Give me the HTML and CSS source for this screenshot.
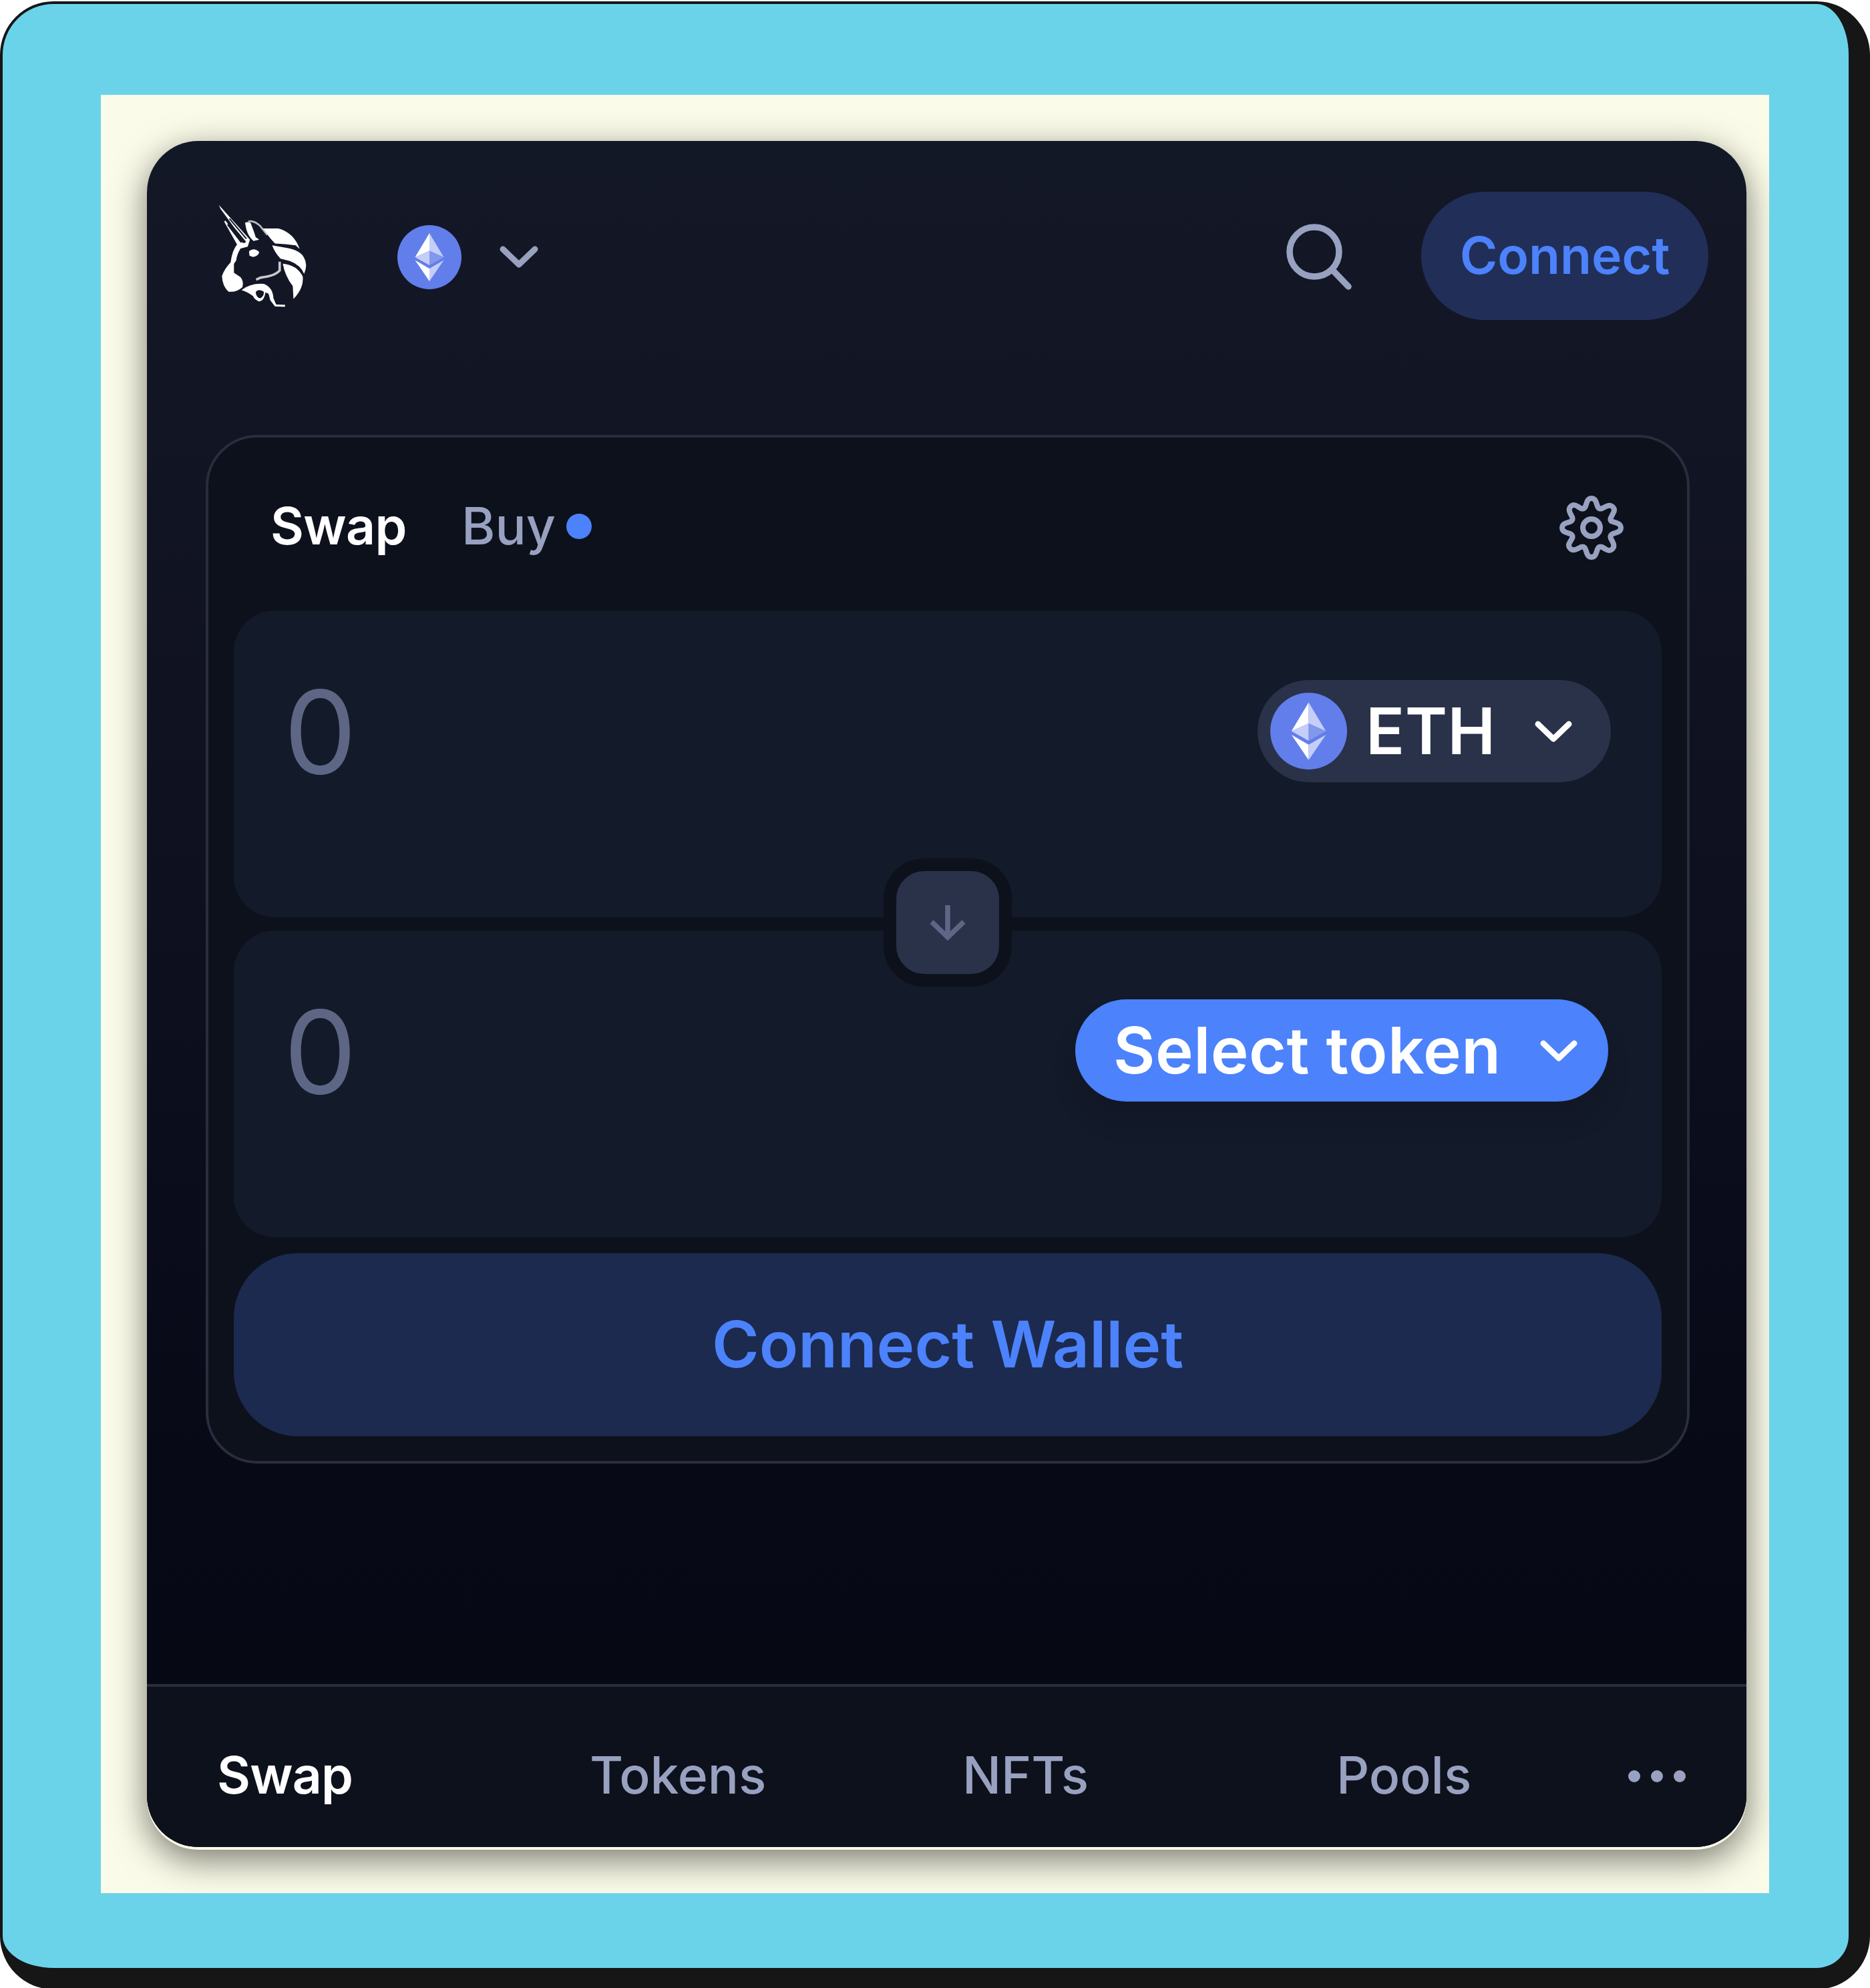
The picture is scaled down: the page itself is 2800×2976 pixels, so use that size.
FILE: index.html
```
<!DOCTYPE html>
<html lang="en">
<head>
<meta charset="utf-8">
<title>Swap</title>
<link rel="stylesheet" href="styles.css">
</head>
<body>
<svg class="defs" aria-hidden="true">
  <symbol id="eth" viewBox="0 0 96 96">
    <circle cx="48" cy="48" r="48" fill="#627eea"/>
    <path d="M48 12V38.500L26.500 48z" fill="#fff"/>
    <path d="M48 12V38.500L69.500 48z" fill="#c4cef8"/>
    <path d="M26.500 48L48 38.500V60z" fill="#c4cef8"/>
    <path d="M69.500 48L48 38.500V60z" fill="#8298ee"/>
    <path d="M26.500 52.500L48 65V84z" fill="#fff"/>
    <path d="M69.500 52.500L48 65V84z" fill="#c4cef8"/>
  </symbol>
  <symbol id="chevron" viewBox="0 0 58 34">
    <path d="M5 5L29 28L53 5" fill="none" stroke="currentColor" stroke-width="9" stroke-linecap="round" stroke-linejoin="round"/>
  </symbol>
</svg>
<div class="frame">
  <div class="mat">
    <div class="device">
      <div class="app">
        <header class="header">
          <svg class="logo" viewBox="80 78 400 462" fill="#fff">
            <path d="M82 80L222 236L212 268L180 276Q164 300 160 330L150 345V385L180 405Q196 425 188 450Q160 475 125 470Q98 445 96 400Q105 370 135 338Q142 285 164 258L106 155L112 150L180 246L196 252L205 246L150 180L90 98z"/>
            <path d="M130 142L206 232" fill="none" stroke="#141827" stroke-width="6"/>
            <path d="M124 166L186 246" fill="none" stroke="#141827" stroke-width="13"/>
            <path d="M200 160Q210 154 225 160L240 200L248 225L264 236L238 242Q215 222 206 190z"/>
            <path d="M214 154Q240 148 268 174L300 215" fill="none" stroke="#b9bbc2" stroke-width="8"/>
            <path d="M280 186L350 186Q420 205 446 278L428 262Q380 255 335 253Q310 228 296 205z"/>
            <path d="M322 262L390 274Q450 285 466 318Q484 350 466 390Q450 350 402 332L360 322Q334 295 322 262z"/>
            <path d="M370 344Q435 350 460 402Q465 455 418 503L415 445Q380 400 370 344z"/>
            <path d="M218 288Q240 270 264 292Q260 312 236 314L220 308z"/>
            <path d="M356 335V375Q335 400 270 407L250 416" fill="none" stroke="#c9cad0" stroke-width="11"/>
            <path fill-rule="evenodd" d="M184 463Q225 430 285 435Q325 450 328 500L340 528L380 529V538L335 537L314 510L306 480L292 474Q285 515 262 514Q242 505 236 490Q210 470 184 463zM248 472Q258 456 284 470Q288 488 270 500Q250 498 248 472z"/>
          </svg>
          <div class="network">
            <svg class="network-coin"><use href="#eth"/></svg>
            <svg class="network-chevron"><use href="#chevron"/></svg>
          </div>
          <svg class="search" viewBox="0 0 100 100" fill="none" stroke="currentColor" stroke-width="9.500" stroke-linecap="round"><circle cx="42" cy="42" r="37"/><path d="M69 69L93 94"/></svg>
          <button class="connect">Connect</button>
        </header>
        <main class="swap">
          <div class="tabs">
            <span class="tab tab-active">Swap</span>
            <span class="tab">Buy</span>
            <i class="dot"></i>
            <svg class="gear" viewBox="0 0 96 96" fill="none" stroke="currentColor" stroke-width="8" stroke-linejoin="round">
              <circle cx="48" cy="48" r="13"/>
              <path d="M41 10Q43 4 48 4Q53 4 55 10L57 16Q59 21 64 19L70 16Q76 13 80 17Q84 21 80 27L77 33Q75 38 80 39L86 41Q92 43 92 48Q92 53 86 55L80 57Q75 59 77 64L80 70Q83 76 79 80Q75 84 69 80L64 77Q59 75 57 80L55 86Q53 92 48 92Q43 92 41 86L39 80Q37 75 32 77L26 80Q20 83 16 79Q12 75 16 69L19 64Q21 59 16 57L10 55Q4 53 4 48Q4 43 10 41L16 39Q21 37 19 32L16 26Q13 20 17 16Q21 12 27 16L32 19Q37 21 39 16z"/>
            </svg>
          </div>
          <section class="panel">
            <span class="amount">0</span>
            <button class="token token-eth"><svg class="token-coin"><use href="#eth"/></svg><span class="token-name">ETH</span><svg class="token-chevron"><use href="#chevron"/></svg></button>
            <button class="flip" aria-label="Flip tokens"><svg viewBox="0 0 54 54" fill="none" stroke="currentColor" stroke-width="7.500"><path d="M27 0V49M3 25L27 48L51 25"/></svg></button>
          </section>
          <section class="panel">
            <span class="amount">0</span>
            <button class="token token-select"><span class="select-label">Select token</span><svg class="token-chevron"><use href="#chevron"/></svg></button>
          </section>
          <button class="wallet">Connect Wallet</button>
        </main>
        <nav class="nav">
          <a class="nav-item nav-active">Swap</a>
          <a class="nav-item">Tokens</a>
          <a class="nav-item">NFTs</a>
          <a class="nav-item">Pools</a>
          <svg class="more" viewBox="0 0 88 20" fill="currentColor"><circle cx="10" cy="10" r="9"/><circle cx="44" cy="10" r="9"/><circle cx="78" cy="10" r="9"/></svg>
        </nav>
      </div>
    </div>
  </div>
</div>
</body>
</html>
```
FILE: styles.css
```
* { box-sizing: border-box; }
body { margin: 0; background: #fff; height: 2976px; overflow: hidden; font-family: Inter, "Liberation Sans", sans-serif; padding-top: 2px; }
button { border: 0; padding: 0; font: inherit; color: inherit; }
svg { display: block; flex: none; }
.defs { width: 0; height: 0; position: absolute; }
.frame { width: 2800px; height: 2976px; background: #6ad3e9; border: solid #161616; border-width: 4px 32px 32px 4px; border-radius: 80px; padding: 136px 119px 112px 147px; }
.mat { height: 2692px; background: #fafbe8; padding: 69px 34px 65px 69px; overflow: hidden; }
.device { height: 2558px; background: #fafbe8; padding-bottom: 4px; border-radius: 77px; box-shadow: 0 15px 52px rgba(0, 0, 0, .52); }
.app { height: 2554px; border-radius: 77px; overflow: hidden; display: flex; flex-direction: column; background: linear-gradient(#131826 0, #131625 250px, #0f1121 1000px, #080917 2000px, #060814 2310px); color: #98a1c0; font-size: 76.8px; font-weight: 540; }

.header { height: 344px; padding: 0 57px 0 107px; display: flex; align-items: center; }
.logo { width: 133px; height: 154px; }
.network { margin: 4px auto 0 135px; display: flex; align-items: center; gap: 57px; }
.network-coin { width: 96px; height: 96px; }
.network-chevron { width: 58px; height: 34px; }
.search { width: 100px; height: 100px; margin: 3px 102px 0 0; }
.connect { width: 430px; height: 192px; padding-bottom: 2px; border-radius: 96px; background: #212f58; color: #4c82fb; font-weight: 600; }

.swap { width: 2222px; height: 1540px; margin: 96px 0 0 88px; border: 4px solid #2a2d3d; border-radius: 77px; background: #0d111b; padding: 0 38px; display: flex; flex-direction: column; }
.tabs { height: 259px; padding: 5px 57px 0 55px; display: flex; align-items: center; }
.tab { width: 157px; }
.tab-active { width: 286px; color: #fff; font-weight: 600; letter-spacing: -.6px; }
.dot { width: 38px; height: 38px; border-radius: 50%; background: #4c82fb; margin-top: 2px; }
.gear { width: 96px; height: 96px; margin: 6px 0 0 auto; }
.panel { position: relative; height: 459px; margin-bottom: 20px; padding: 103px 76px 0 75px; border-radius: 61px; background: #131a29; display: flex; justify-content: space-between; align-items: flex-start; }
.amount { font-size: 172.8px; line-height: 158px; font-weight: 400; color: #5d6785; }
.token { height: 153px; border-radius: 77px; display: flex; align-items: center; color: #fff; font-size: 96px; font-weight: 640; line-height: 112px; letter-spacing: .5px; }
.token-eth { width: 529px; margin-top: 1px; background: #293249; padding-left: 19px; }
.token-coin { width: 115px; height: 115px; }
.token-name { margin: 0 0 2px 28px; }
.token-chevron { width: 56px; height: 33px; margin: 1px 58px 0 auto; }
.token-select { width: 798px; margin-right: 4px; background: #4c82fb; padding-left: 57px; box-shadow: 0 29px 30px rgba(18, 21, 35, .35); }
.token-select .token-chevron { margin: 2px 46px 0 auto; }
.select-label { margin-bottom: 1px; }
.flip { position: absolute; z-index: 1; left: 973px; top: 371px; width: 192px; height: 192px; border: 19px solid #0d111b; border-radius: 61px; background: #293249; color: #5d6785; display: flex; align-items: center; justify-content: center; padding-top: 2px; }
.flip svg { width: 54px; height: 54px; }
.wallet { height: 274px; margin-top: 4px; padding-bottom: 2px; border-radius: 96px; background: #1b2a4e; color: #4c82fb; font-size: 96px; font-weight: 590; }

.nav { height: 244px; margin-top: auto; border-top: 4px solid #2a2d3d; background: #0d111b; padding: 24px 90px 0 105px; display: grid; grid-template-columns: 558px 558px 560px 1fr auto; align-items: center; }
.nav-active { color: #fff; font-weight: 600; letter-spacing: -.8px; }
.more { width: 88px; height: 20px; margin-top: 3px; }
```
